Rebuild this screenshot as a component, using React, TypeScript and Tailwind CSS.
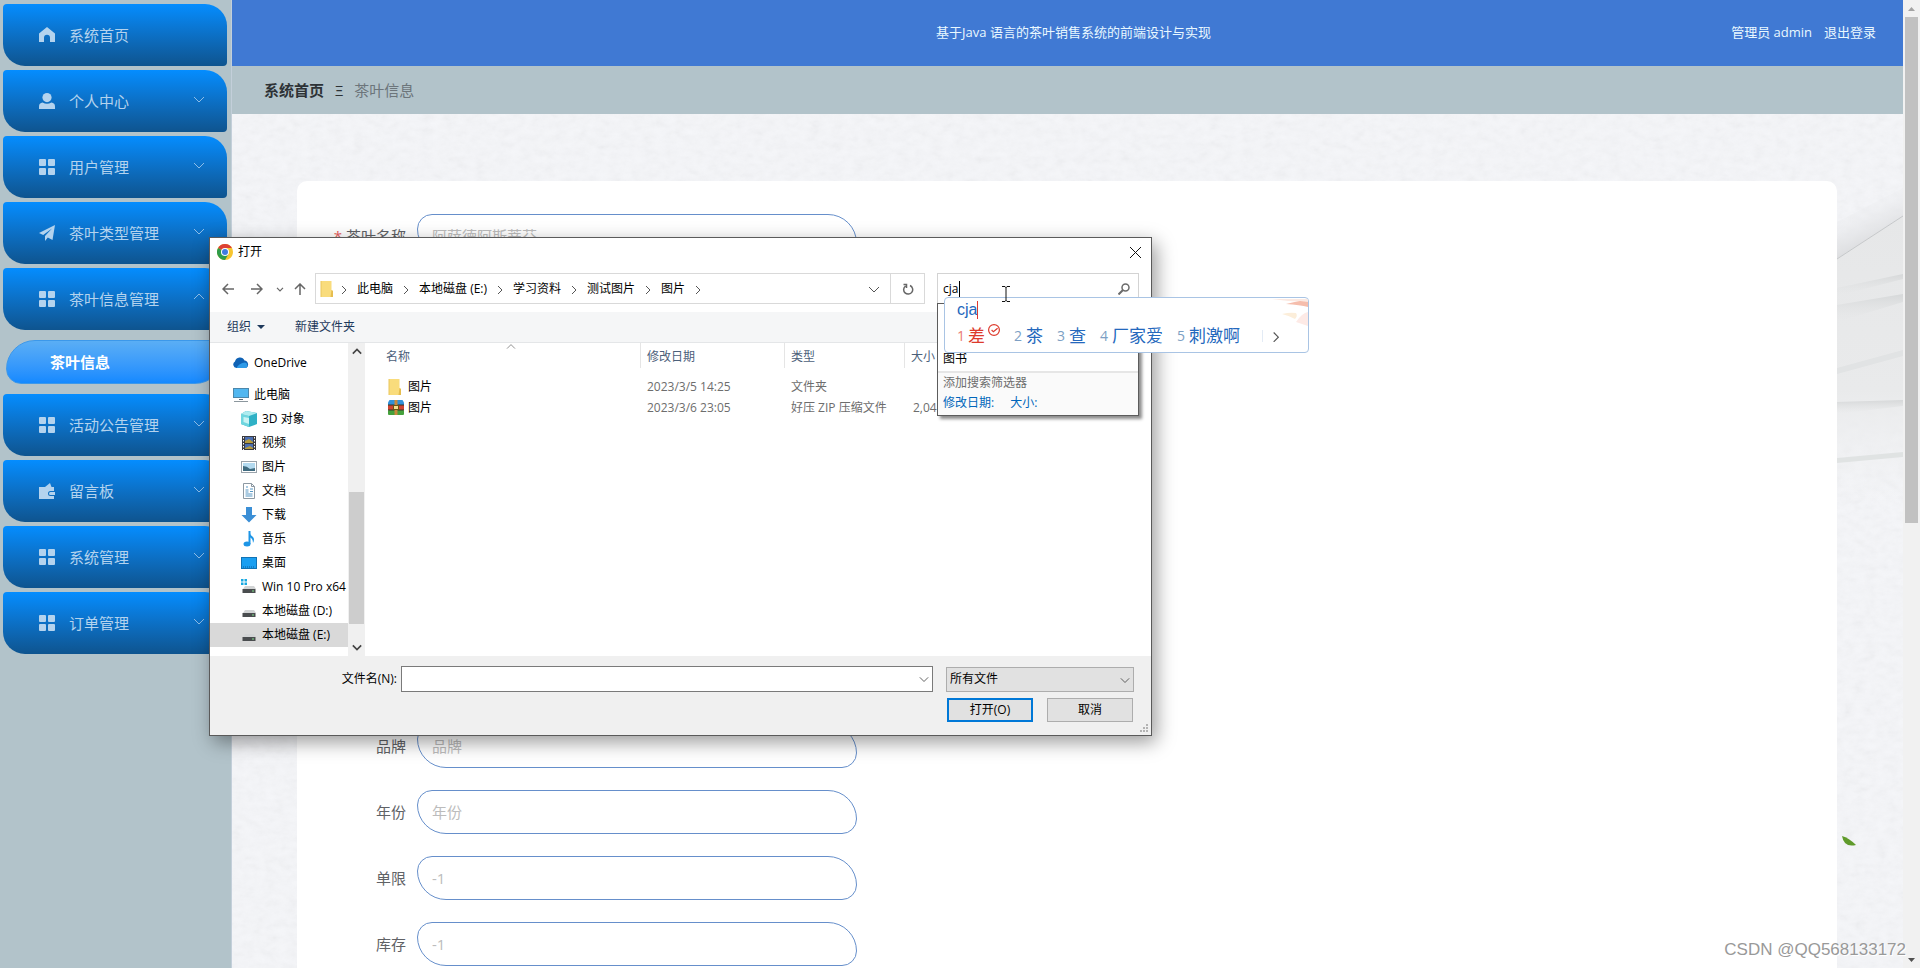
import type { ReactNode } from 'react';

type IconName = 'home' | 'user' | 'grid' | 'plane' | 'wallet';

const MENU_TOP: { label: string; icon: IconName; arrow?: 'up' | 'down' }[] = [
  { label: '系统首页', icon: 'home' },
  { label: '个人中心', icon: 'user', arrow: 'down' },
  { label: '用户管理', icon: 'grid', arrow: 'down' },
  { label: '茶叶类型管理', icon: 'plane', arrow: 'down' },
  { label: '茶叶信息管理', icon: 'grid', arrow: 'up' },
];

const MENU_BOTTOM: { label: string; icon: IconName; arrow?: 'up' | 'down' }[] = [
  { label: '活动公告管理', icon: 'grid', arrow: 'down' },
  { label: '留言板', icon: 'wallet', arrow: 'down' },
  { label: '系统管理', icon: 'grid', arrow: 'down' },
  { label: '订单管理', icon: 'grid', arrow: 'down' },
];

const FIELDS = [
  { id: 'brand', label: '品牌', placeholder: '品牌' },
  { id: 'year', label: '年份', placeholder: '年份' },
  { id: 'limit', label: '单限', placeholder: '-1' },
  { id: 'stock', label: '库存', placeholder: '-1' },
];

const PATH = ['此电脑', '本地磁盘 (E:)', '学习资料', '测试图片', '图片'];

const CANDIDATES = ['茶', '查', '厂家爱', '刺激啊'];

function Chevron({ dir, className }: { dir: 'up' | 'down' | 'right'; className?: string }) {
  const d = { up: 'M1 7 6 2l5 5', down: 'M1 3l5 5 5-5', right: 'M4 2l4 4-4 4' }[dir];
  return (
    <svg viewBox="0 0 12 10" className={className} fill="none" stroke="currentColor">
      <path d={d} />
    </svg>
  );
}

function MenuIcon({ name }: { name: IconName }) {
  return (
    <svg viewBox="0 0 16 16" className="size-4 shrink-0" fill="currentColor">
      {name === 'home' && <path d="M8 0 0 6.600V15h5v-4.200a3 3 0 0 1 6 0V15h5V6.600z" />}
      {name === 'user' && (
        <>
          <circle cx="8" cy="4.600" r="4.600" />
          <path d="M0 16v-2.400a4 4 0 0 1 3.600-4Q8 12 12.400 9.600a4 4 0 0 1 3.600 4V16z" />
        </>
      )}
      {name === 'grid' && (
        <>
          <rect width="7" height="7" rx="1" />
          <rect x="9" width="7" height="7" rx="1" />
          <rect y="9" width="7" height="7" rx="1" />
          <rect x="9" y="9" width="7" height="7" rx="1" />
        </>
      )}
      {name === 'plane' && <path d="M16 0 0 8l4.200 2L13 3.500 6 11v5l2.800-3.500L13.500 15z" />}
      {name === 'wallet' && (
        <>
          <path d="M0 4h6l5-4 1.500 4H15v4h-3.500a2.500 2.500 0 0 0 0 5H15v3H0z" />
          <path d="M11.500 9H16v3h-4.500a1.500 1.500 0 0 1 0-3z" />
        </>
      )}
    </svg>
  );
}

function MenuItem({ label, icon, arrow }: { label: string; icon: IconName; arrow?: 'up' | 'down' }) {
  return (
    <a
      href="#"
      className="flex h-[62px] items-center gap-3.5 rounded-[4px_22px_4px_22px] bg-linear-to-b from-[#048dff] to-[#0e548f] pl-9 pr-[22px] text-[15px] text-[#b4d3ee]"
    >
      <MenuIcon name={icon} />
      <span className="flex-1">{label}</span>
      {arrow && <Chevron dir={arrow} className="mb-1 h-2.5 w-3 text-[#8dbde8]" />}
    </a>
  );
}

function Sidebar() {
  return (
    <nav className="w-[231px] shrink-0 bg-[#b2c3ca] pl-[3px] pr-1 pt-1">
      <div className="flex flex-col gap-1">
        {MENU_TOP.map((m) => <MenuItem key={m.label} {...m} />)}
      </div>
      <a
        href="#"
        className="mx-[3px] my-2.5 flex h-11 items-center rounded-[29px_15px_29px_15px] border border-[#3c98ea] bg-linear-to-b from-[#5aaef5] to-[#1389ff] pl-[43px] text-[15px] font-bold text-white"
      >
        茶叶信息
      </a>
      <div className="flex flex-col gap-1">
        {MENU_BOTTOM.map((m) => <MenuItem key={m.label} {...m} />)}
      </div>
    </nav>
  );
}

function Field({ id, label, placeholder, required }: { id: string; label: string; placeholder: string; required?: boolean }) {
  return (
    <div className="flex items-center gap-[11px]">
      <label htmlFor={id} className="w-20 text-right text-[15px] text-[#606266]">
        {required && <span className="mr-1 text-[#e85c5c]">*</span>}
        {label}
      </label>
      <input
        id={id}
        placeholder={placeholder}
        className="h-11 w-[440px] rounded-[15px_29px_15px_29px] border border-[#668fcb] bg-white px-3.5 text-[15px] outline-none placeholder:text-[#bcbcbc]"
      />
    </div>
  );
}

/* plaster wall behind the card, with stone folds and a leaf at its right edge */
function Backdrop() {
  return (
    <>
      <svg className="absolute inset-0 size-full opacity-10">
        <filter id="plaster">
          <feTurbulence type="fractalNoise" baseFrequency="0.09 0.14" numOctaves="3" seed="4" />
          <feColorMatrix type="saturate" values="0" />
        </filter>
        <rect width="100%" height="100%" filter="url(#plaster)" />
      </svg>
      <svg className="absolute right-0 top-0 h-[854px] w-[66px]" viewBox="0 0 66 854">
        <defs>
          <linearGradient id="stone" x1="0" y1="0" x2="0" y2="1">
            <stop offset="0" stopColor="#e6e7e8" />
            <stop offset=".6" stopColor="#e9eaeb" />
            <stop offset="1" stopColor="#eff0f1" stopOpacity="0" />
          </linearGradient>
          <linearGradient id="fold" x1=".3" y1=".1" x2=".6" y2=".8">
            <stop offset="0" stopColor="#eff0f3" stopOpacity="0" />
            <stop offset="1" stopColor="#d9dadc" />
          </linearGradient>
          <linearGradient id="band" x1="0" y1="0" x2="0" y2="1">
            <stop offset="0" stopColor="#d6d8d9" />
            <stop offset="1" stopColor="#e6e7e8" stopOpacity="0" />
          </linearGradient>
        </defs>
        <path d="M0 108 66 74v28L0 145z" fill="url(#fold)" />
        <path d="M0 145 66 102v290H0z" fill="url(#stone)" />
        <path d="M0 145 66 102" stroke="#c6c8ca" />
        <path d="M0 174 66 160v5L0 182z" fill="url(#band)" />
        <path d="M0 191 66 180v8L0 208z" fill="url(#band)" />
        <path d="M0 254 66 236v6L0 260z" fill="#e1e3e4" />
        <path d="M0 288 66 286v6L0 300z" fill="url(#band)" />
        <path d="M0 344 66 338v5L0 349z" fill="#e0e3e3" />
        <path d="M5 722q7 2 14 9-12 3-14-9z" fill="#5f9a2a" />
      </svg>
    </>
  );
}

function FolderIcon() {
  return (
    <svg viewBox="0 0 14 16" className="h-4 w-3.5 shrink-0">
      <path d="M1 0h10.500v9L13 10v6H1z" fill="#f9dc7c" />
      <path d="M11.500 9 13 10v6h-2.500z" fill="#e6bd4f" />
      <path d="M1 0v16" stroke="#eac65c" />
    </svg>
  );
}

function ZipIcon() {
  return (
    <svg viewBox="0 0 16 15" className="h-[15px] w-4 shrink-0">
      <path d="M1.500 0h13L16 2.500V5H0V2.500z" fill="#3191d8" />
      <rect y="5" width="16" height="5" fill="#cf4431" />
      <rect y="10" width="16" height="5" rx="1" fill="#45a13c" />
      <path d="M0 5h16M0 10h16" stroke="#3a3327" />
      <path d="M6.500 0h3v15h-3z" fill="#c9883a" />
      <rect x="5.500" y="5.500" width="5" height="4" fill="#f3dc8e" stroke="#6b5514" />
    </svg>
  );
}

function Disk({ windows }: { windows?: boolean }) {
  return (
    <>
      {windows && <path d="M0 0h2.500v2.500H0zM3.500 0H6v2.500H3.500zM0 3.500h2.500V6H0zM3.500 3.500H6V6H3.500z" fill="#19a8e0" />}
      <path d="M4 7h9l2 3H2z" fill="#d2d4d5" />
      <rect x="1.500" y="10" width="13" height="4" fill="#4a4d4f" />
      <path d="M11 12h2" stroke="#7ee08a" />
    </>
  );
}

const TREE: { label: string; icon: ReactNode; active?: boolean }[] = [
  {
    label: '3D 对象',
    icon: (
      <>
        <path d="M5 0 16 2v11l-8 3-8-3V3z" fill="#2fb1c6" />
        <path d="M0 3l8 2v11l-8-3z" fill="#6fd6df" />
        <path d="M2.500 6 8 7v6l-5.500-2z" fill="#c9f3f4" />
        <path d="M5 0 16 2 8 5 0 3z" fill="#aeecef" />
      </>
    ),
  },
  {
    label: '视频',
    icon: (
      <>
        <rect x="1" y="1" width="14" height="14" fill="#3b3b3f" />
        <rect x="4" y="2" width="8" height="6" fill="#4b6fb2" />
        <rect x="4" y="9" width="8" height="5" fill="#4b6fb2" />
        <path d="M4 6l4-2 4 3v1H4zM4 13l5-2 3 2v1H4z" fill="#b59b3c" />
        <path d="M2.500 2v13M13.500 2v13" stroke="#fff" strokeDasharray="1.500 1.500" />
      </>
    ),
  },
  {
    label: '图片',
    icon: (
      <>
        <rect x=".5" y="2.500" width="15" height="11" fill="#fff" stroke="#9aa3ab" />
        <path d="M2 4h12v8H2z" fill="#b3daf0" />
        <path d="M2 7q4 0 7 3l5-1v3H2z" fill="#3f6b80" />
      </>
    ),
  },
  {
    label: '文档',
    icon: (
      <>
        <path d="M2.500.5h8l3 3v12h-11z" fill="#fff" stroke="#8d99a3" />
        <path d="M10.500.5v3h3" fill="none" stroke="#8d99a3" />
        <path d="M4.500 7h3M9 6h3M4.500 9h3M9 8.500h3M4.500 11h7M4.500 13h7M6 3v2" stroke="#5797c4" />
      </>
    ),
  },
  { label: '下载', icon: <path d="M5 0h6v8h4.500L8 15.500.5 8H5z" fill="#3b8fd6" /> },
  {
    label: '音乐',
    icon: (
      <>
        <ellipse cx="6" cy="13" rx="3.500" ry="2.500" fill="#1d95e6" />
        <path d="M8.500 0v13" stroke="#1d95e6" strokeWidth="2" />
        <path d="M8 0q1 4 4 6 2 2 0 6 0-5-4-6z" fill="#1d95e6" />
      </>
    ),
  },
  {
    label: '桌面',
    icon: (
      <>
        <rect x=".5" y="2.500" width="15" height="11" fill="#1a9ff1" stroke="#1173b5" />
        <path d="M2 12h12" stroke="#0d5d99" strokeDasharray="1 1" />
      </>
    ),
  },
  { label: 'Win 10 Pro x64', icon: <Disk windows /> },
  { label: '本地磁盘 (D:)', icon: <Disk /> },
  { label: '本地磁盘 (E:)', icon: <Disk />, active: true },
];

function TitleBar() {
  return (
    <div className="flex h-7 items-center gap-[5px] pl-[7px] pr-2.5 text-xs">
      <svg viewBox="0 0 16 16" className="size-4">
        <circle cx="8" cy="8" r="8" fill="#f7c52e" />
        <path d="M8 8 1.070 4A8 8 0 0 1 14.930 4H8z" fill="#dd4034" />
        <path d="M8 8 1.070 4A8 8 0 0 0 8 16l3.500-6z" fill="#2f9c4b" />
        <circle cx="8" cy="8" r="4" fill="#fff" />
        <circle cx="8" cy="8" r="3" fill="#3f7be0" />
      </svg>
      <span className="flex-1">打开</span>
      <button aria-label="关闭">
        <svg viewBox="0 0 11 11" className="size-[11px]" stroke="#111">
          <path d="M0 0l11 11M11 0 0 11" />
        </svg>
      </button>
    </div>
  );
}

function SearchBox() {
  return (
    <div className="relative ml-3 w-[202px]">
      <div className="flex h-[31px] items-center border border-[#d3d3d3] pl-[5px] pr-2">
        <input aria-label="搜索" defaultValue="cja" className="min-w-0 flex-1 outline-none" />
        <svg viewBox="0 0 12 12" className="size-3" fill="none" stroke="#6b6b6b" strokeWidth="1.500">
          <circle cx="7.500" cy="4.500" r="3.500" />
          <path d="M5 7 .5 11.500" strokeWidth="2" />
        </svg>
      </div>
      <span className="absolute left-[22px] top-2 h-4 w-px bg-black" />

      {/* search history and filters */}
      <div className="absolute inset-x-0 top-[30px] z-10 h-[113px] border border-[#5c5c5c] bg-white shadow-[3px_3px_3px_rgba(0,0,0,0.45)]">
        <div className="flex h-[67px] flex-col justify-end pb-0.5 pl-[5px] leading-5">图书</div>
        <div className="h-11 border-t-2 border-[#e6e6e6] bg-[#fafafa] pl-[5px] leading-5 text-[#6d6d6d]">
          <p>添加搜索筛选器</p>
          <p className="flex gap-4 text-[#0066bb]">
            <a href="#">修改日期:</a>
            <a href="#">大小:</a>
          </p>
        </div>
      </div>

      <ImePanel />

      {/* text cursor */}
      <svg viewBox="0 0 8 16" className="absolute left-[65px] top-[13px] z-30 h-4 w-2" fill="none" stroke="#111">
        <path d="M0 .5h3l1 1 1-1h3M0 15.500h3l1-1 1 1h3M4 1v14" />
      </svg>
    </div>
  );
}

function ImePanel() {
  return (
    <div className="absolute left-[7px] top-6 z-20 h-[56px] w-[365px] overflow-hidden rounded-sm border border-[#a9c4e4] bg-white pl-3 text-[#2468bd]">
      <div className="flex h-6 items-center font-['Liberation_Sans',sans-serif] text-base">
        cja
        <span className="h-[18px] w-px bg-[#e03a2f]" />
      </div>
      <div className="flex h-7 items-center gap-3.5 text-[17px]">
        <span className="flex items-center gap-[3px] text-[#dd3a2c]">
          <span className="text-sm text-[#ea7b74]">1</span>
          差
          <svg viewBox="0 0 10 10" className="mb-3 size-3" fill="none" stroke="currentColor">
            <circle cx="5" cy="5" r="4.500" />
            <path d="M3 5l1.500 1.500L8 3.500" />
          </svg>
        </span>
        {CANDIDATES.map((c, i) => (
          <span key={c} className="flex items-center gap-1">
            <span className="text-sm text-[#7d9fc4]">{i + 2}</span>
            {c}
          </span>
        ))}
        <span className="ml-2 h-3 w-px bg-[#e3ebf5]" />
        <Chevron dir="right" className="-ml-2 h-3 w-3.5 text-[#555]" />
      </div>
      <svg viewBox="0 0 40 30" className="absolute right-0 top-0 h-[30px] w-10">
        <path d="M4 1h36v3L20 3z" fill="#fbe9e2" />
        <path d="M18 6q8-2 14-3l8 1v5q-8-2-22-3z" fill="#f2ad97" opacity=".8" />
        <path d="M14 16q8 2 13 5 3-3 1-6-6-1-14 1z" fill="#fceeda" />
        <path d="M28 24q6-9 12-10v14z" fill="#fdeae6" />
      </svg>
    </div>
  );
}

function AddressRow() {
  return (
    <div className="mt-[7px] flex h-[31px] pl-3 pr-3 text-xs">
      <div className="flex w-[93px] items-center gap-[17px] text-[#666]">
        <svg viewBox="0 0 12 12" className="size-3" fill="none" stroke="currentColor" strokeWidth="1.500">
          <path d="M12 6H1M6 1 1 6l5 5" />
        </svg>
        <svg viewBox="0 0 12 12" className="size-3" fill="none" stroke="currentColor" strokeWidth="1.500">
          <path d="M0 6h11M6 1l5 5-5 5" />
        </svg>
        <div className="flex items-center gap-2.5">
          <Chevron dir="down" className="-ml-1 h-1.5 w-2 stroke-2" />
          <svg viewBox="0 0 12 12" className="size-3" fill="none" stroke="currentColor" strokeWidth="1.500">
            <path d="M6 12V1M1 6l5-5 5 5" />
          </svg>
        </div>
      </div>
      <div className="flex flex-1 items-center border border-[#d9d9d9] pl-1">
        <FolderIcon />
        <Chevron dir="right" className="ml-1 mr-[7px] h-2.5 w-3 text-[#555]" />
        {PATH.map((p) => (
          <span key={p} className="flex items-center">
            {p}
            <Chevron dir="right" className="mx-[7px] h-2.5 w-3 text-[#555]" />
          </span>
        ))}
        <Chevron dir="down" className="ml-auto mr-2.5 h-2.5 w-3 text-[#555]" />
        <button aria-label="刷新" className="flex h-full w-[34px] items-center justify-center border-l border-[#d9d9d9]">
          <svg viewBox="0 0 12 12" className="size-3" fill="none" stroke="#666" strokeWidth="1.500">
            <path d="M8 2.500a4.500 4.500 0 1 1-4.500.5M1.500 1.500h3v3.500" />
          </svg>
        </button>
      </div>
      <SearchBox />
    </div>
  );
}

function FolderTree() {
  return (
    <div className="flex w-[155px] shrink-0">
      <div className="w-[138px] overflow-hidden whitespace-nowrap pt-2 text-xs">
        <div className="flex h-6 items-center gap-[5px] pl-[23px]">
          <svg viewBox="0 0 16 16" className="size-4">
            <path d="M3.500 13A3.500 3.500 0 0 1 2 6.500 5 5 0 0 1 11.500 5.500 4 4 0 0 1 13 13z" fill="#0f62b5" />
            <path d="M3.500 13Q6 8 12 7.500a3 3 0 0 1 1 5.500z" fill="#2d9ae8" />
          </svg>
          OneDrive
        </div>
        <div className="mt-2 flex h-6 items-center gap-[5px] pl-[23px]">
          <svg viewBox="0 0 16 16" className="size-4">
            <rect x=".5" y="1.500" width="15" height="9" fill="#52b7f0" stroke="#4b87ab" />
            <path d="M1 14.500h14" stroke="#8c979e" />
            <path d="M6 12.500h4" stroke="#5a6c78" />
          </svg>
          此电脑
        </div>
        {TREE.map((t) => (
          <div key={t.label} className={`flex h-6 items-center gap-[5px] pl-[31px] ${t.active ? 'bg-[#d9d9d9]' : ''}`}>
            <svg viewBox="0 0 16 16" className="size-4 shrink-0">{t.icon}</svg>
            {t.label}
          </div>
        ))}
      </div>
      <div className="flex w-[17px] flex-col items-center bg-[#f0f0f0] py-1 text-[#444]">
        <Chevron dir="up" className="h-2.5 w-2.5 stroke-2" />
        <div className="mt-[135px] h-[132px] w-[15px] bg-[#cdcdcd]" />
        <Chevron dir="down" className="mt-auto h-2.5 w-2.5 stroke-2" />
      </div>
    </div>
  );
}

function FileTable() {
  const th = 'h-[25px] border-r border-[#e5e5e5] pl-1.5 pt-0.5 text-left font-normal';
  return (
    <div className="relative flex-1 overflow-hidden">
      <Chevron dir="up" className="absolute left-[140px] top-0 h-2 w-3 text-[#777]" />
      <table className="w-full table-fixed border-separate border-spacing-0 whitespace-nowrap text-xs text-[#6d6d6d]">
        <thead className="text-[#4c607a]">
          <tr>
            <th className="h-[25px] w-[276px] border-r border-[#e5e5e5] pl-[21px] pt-0.5 text-left font-normal">名称</th>
            <th className={`${th} w-36`}>修改日期</th>
            <th className={`${th} w-[120px]`}>类型</th>
            <th className={`${th} border-r-0`}>大小</th>
          </tr>
        </thead>
        <tbody className="before:block before:h-2">
          <tr className="h-[21px]">
            <td className="pl-[23px]">
              <span className="flex items-center gap-1 text-black"><span className="w-4"><FolderIcon /></span>图片</span>
            </td>
            <td className="pl-1.5">2023/3/5 14:25</td>
            <td className="pl-1.5">文件夹</td>
            <td />
          </tr>
          <tr className="h-[21px]">
            <td className="pl-[23px]">
              <span className="flex items-center gap-1 text-black"><ZipIcon />图片</span>
            </td>
            <td className="pl-1.5">2023/3/6 23:05</td>
            <td className="pl-1.5">好压 ZIP 压缩文件</td>
            <td className="pl-2">2,04</td>
          </tr>
        </tbody>
      </table>
    </div>
  );
}

function DialogFooter() {
  return (
    <div className="relative h-[79px] bg-[#f0f0f0] pl-[107px] pr-[17px] pt-2.5 text-xs">
      <div className="flex items-center gap-[13px]">
        <div className="flex flex-1 items-center">
          <label htmlFor="filename" className="w-[84px] pr-1 text-right">文件名(N):</label>
          <div className="relative flex-1">
            <input id="filename" className="block h-[26px] w-full border border-[#7a7a7a] bg-white px-1 outline-none" />
            <Chevron dir="down" className="absolute right-1 top-2 h-2.5 w-2.5 text-[#444]" />
          </div>
        </div>
        <div className="relative w-[188px]">
          <select aria-label="文件类型" className="block h-[25px] w-full appearance-none border border-[#adadad] bg-[#e1e1e1] px-[3px]">
            <option>所有文件</option>
          </select>
          <Chevron dir="down" className="absolute right-1 top-2 h-2.5 w-2.5 text-[#444]" />
        </div>
      </div>
      <div className="mt-1.5 flex justify-end gap-3.5 pr-px">
        <button className="h-6 w-[86px] border-2 border-[#0078d7] bg-[#e1e1e1]">打开(O)</button>
        <button className="h-6 w-[86px] border border-[#adadad] bg-[#e1e1e1]">取消</button>
      </div>
      <svg viewBox="0 0 9 9" className="absolute bottom-0.5 right-0.5 size-[9px]" fill="#b3b3b3">
        <path d="M6 0h2v2H6zM3 3h2v2H3zM6 3h2v2H6zM0 6h2v2H0zM3 6h2v2H3zM6 6h2v2H6z" />
      </svg>
    </div>
  );
}

function OpenDialog() {
  return (
    <div
      role="dialog"
      aria-label="打开"
      className="absolute left-[209px] top-[237px] flex h-[499px] w-[943px] flex-col border border-[#5a5a5a] bg-white text-black shadow-[4px_6px_18px_rgba(0,0,0,0.4)]"
    >
      <TitleBar />
      <AddressRow />
      <div className="mt-2 flex h-[31px] items-center gap-[30px] border-b border-[#e4e6e8] bg-[#f5f6f7] pl-[17px] text-xs text-[#1e395b]">
        <button className="flex items-center gap-1.5">
          组织
          <svg viewBox="0 0 8 4" className="h-1 w-2" fill="currentColor"><path d="M0 0h8L4 4z" /></svg>
        </button>
        <button>新建文件夹</button>
      </div>
      <div className="flex flex-1 overflow-hidden">
        <FolderTree />
        <FileTable />
      </div>
      <DialogFooter />
    </div>
  );
}

function PageScrollbar() {
  return (
    <div className="flex w-[17px] shrink-0 flex-col items-center bg-[#f1f1f1]">
      <svg viewBox="0 0 17 17" className="size-[17px]"><path d="M5 11h7L8.500 7z" fill="#a3a3a3" /></svg>
      <div className="h-[506px] w-[13px] bg-[#c1c1c1]" />
      <svg viewBox="0 0 17 17" className="mt-auto size-[17px]"><path d="M5 7h7l-3.500 4z" fill="#505050" /></svg>
    </div>
  );
}

export default function App() {
  return (
    <div className="relative flex h-screen overflow-hidden bg-[#f5f6f9] font-['Open_Sans','Noto_Sans_CJK_SC',sans-serif]">
      <Sidebar />
      <main className="flex min-w-0 flex-1 flex-col border-l border-[#c3cfda]">
        <header className="grid h-[66px] shrink-0 grid-cols-[1fr_auto_1fr] items-center bg-[#4079d3] pl-[39px] pr-[27px] text-[13px] text-[#e9f8ff]">
          <h1 className="col-start-2">基于Java 语言的茶叶销售系统的前端设计与实现</h1>
          <div className="flex justify-end gap-3">
            <span>管理员 admin</span>
            <a href="#">退出登录</a>
          </div>
        </header>
        <div className="flex h-12 shrink-0 items-center gap-[11px] bg-[#b2c3ca] pl-8 text-[15px] text-[#6c757b]">
          <a href="#" className="font-bold text-[#2d3236]">系统首页</a>
          <span className="text-[#2d3236]">Ξ</span>
          <span>茶叶信息</span>
        </div>
        <div className="relative flex-1 pl-[65px] pr-[66px] pt-[67px]">
          <Backdrop />
          <form className="relative flex flex-col gap-[22px] rounded-[10px] bg-white pb-16 pl-[29px] pt-[33px]">
            <Field id="name" label="茶叶名称" placeholder="阿萨德阿斯蒂芬" required />
            <div className="h-[422px]" />
            {FIELDS.map((f) => <Field key={f.id} {...f} />)}
          </form>
        </div>
      </main>
      <PageScrollbar />
      <OpenDialog />
      <p className="absolute bottom-1.5 right-3.5 font-['Liberation_Sans',sans-serif] text-[17px] leading-6 text-[#999] [text-shadow:1px_1px_0_#fff]">
        CSDN @QQ568133172
      </p>
    </div>
  );
}
